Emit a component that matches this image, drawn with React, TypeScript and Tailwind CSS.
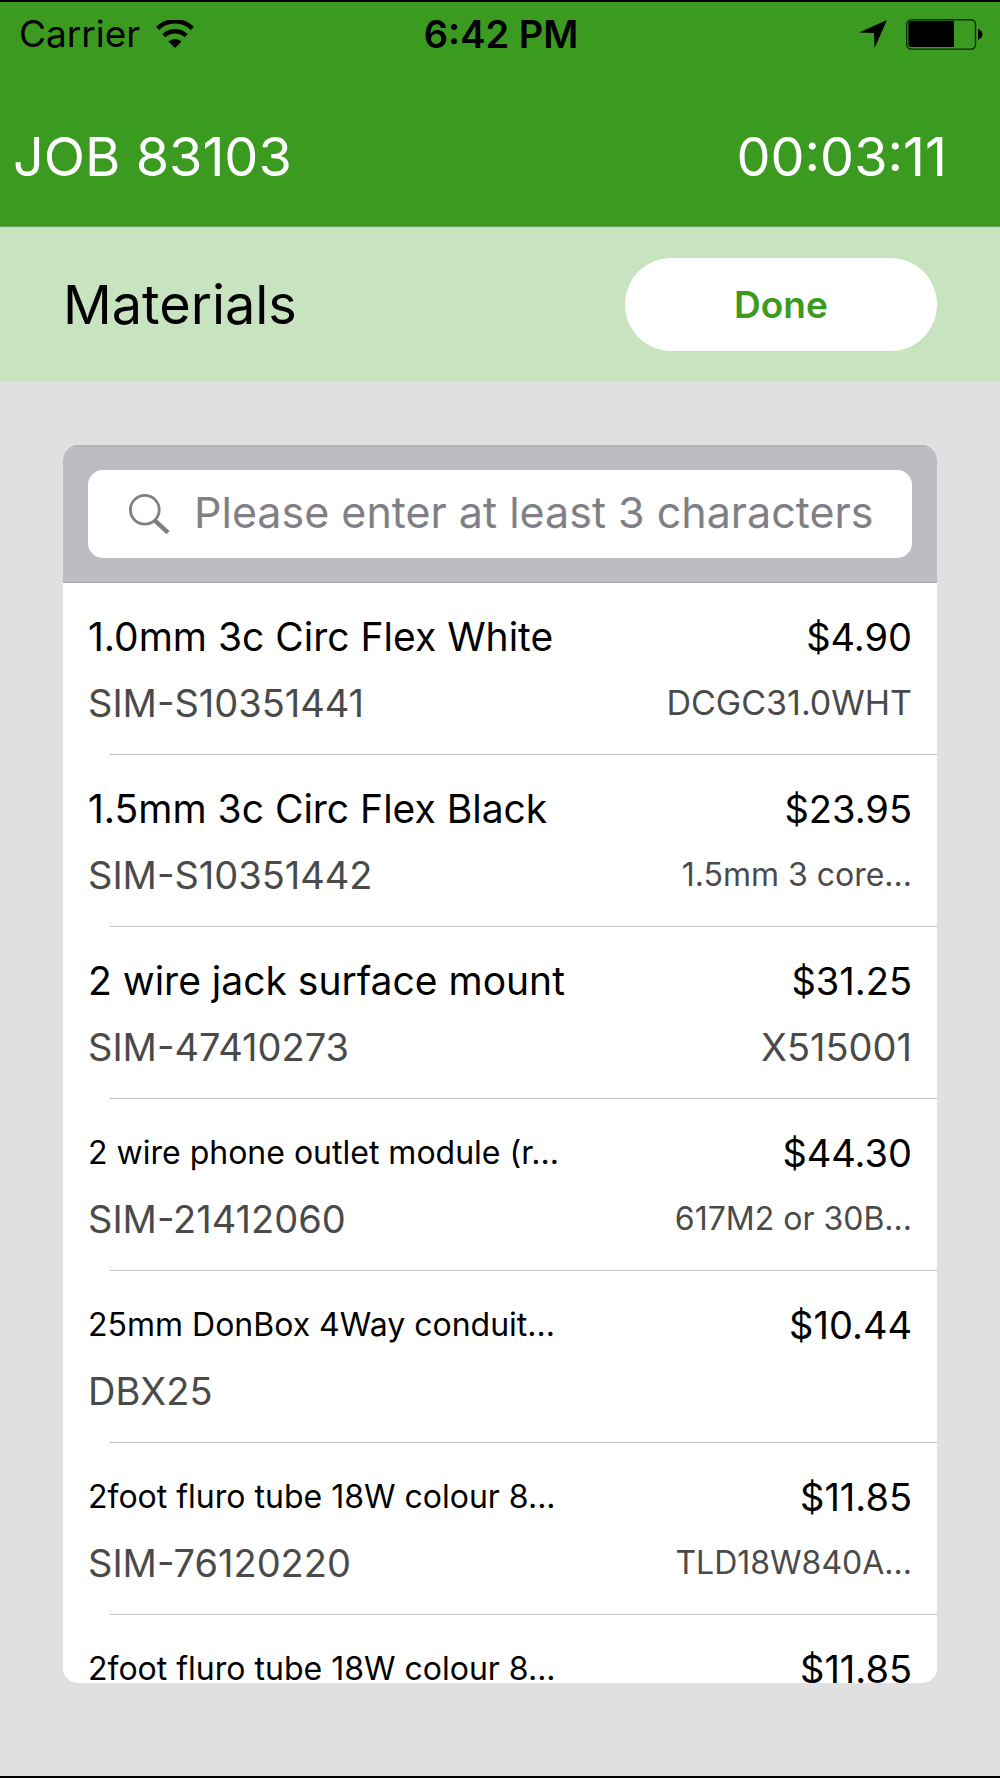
import React from "react";

type Material = {
  name: string;
  price: string;
  sku?: string;
  code?: string;
  codeSize?: string;
  longName?: boolean;
};

const materials: Material[] = [
  { name: "1.0mm 3c Circ Flex White", price: "$4.90", sku: "SIM-S10351441", code: "DCGC31.0WHT", codeSize: "text-[34px]" },
  { name: "1.5mm 3c Circ Flex Black", price: "$23.95", sku: "SIM-S10351442", code: "1.5mm 3 core...", codeSize: "text-[32px]" },
  { name: "2 wire jack surface mount", price: "$31.25", sku: "SIM-47410273", code: "X515001", codeSize: "text-[38px]" },
  { name: "2 wire phone outlet module (r...", price: "$44.30", sku: "SIM-21412060", code: "617M2 or 30B...", codeSize: "text-[32px]", longName: true },
  { name: "25mm DonBox 4Way conduit...", price: "$10.44", sku: "DBX25", longName: true },
  { name: "2foot fluro tube 18W colour 8...", price: "$11.85", sku: "SIM-76120220", code: "TLD18W840A...", codeSize: "text-[32px]", longName: true },
  { name: "2foot fluro tube 18W colour 8...", price: "$11.85", longName: true },
];

function WifiIcon() {
  return (
    <svg width="38" height="28" viewBox="0 0 38 28" aria-hidden="true">
      <path d="M1.6 8.4 A25 25 0 0 1 36.4 8.4" fill="none" stroke="#000" strokeWidth="4.4" />
      <path d="M7.8 15.8 A16 16 0 0 1 30.2 15.8" fill="none" stroke="#000" strokeWidth="4.4" />
      <path d="M12.4 21.6 A9.4 9.4 0 0 1 25.6 21.6 L19 28 Z" fill="#000" />
    </svg>
  );
}

function LocationIcon() {
  return (
    <svg width="28" height="28" viewBox="0 0 28 28" aria-hidden="true">
      <path d="M28 0 L15.6 28 L15 13 L0 12.4 Z" fill="#000" />
    </svg>
  );
}

function BatteryIcon() {
  return (
    <svg width="77" height="31" viewBox="0 0 77 31" aria-hidden="true">
      <rect x="0.7" y="0.7" width="68.8" height="29.4" rx="4.5" fill="none" stroke="#0b2a05" strokeWidth="1.4" />
      <path d="M4.5 2 H48 V28 H4.5 Q2.4 28 2.4 26 V4 Q2.4 2 4.5 2 Z" fill="#000" />
      <path d="M72 10 Q76.4 11.5 76.4 15.3 Q76.4 19.2 72 20.8 Z" fill="#000" />
    </svg>
  );
}

function SearchIcon() {
  return (
    <svg width="41" height="41" viewBox="0 0 41 41" aria-hidden="true" className="shrink-0">
      <circle cx="15.8" cy="15.8" r="14.4" fill="none" stroke="#7f7f85" strokeWidth="2.8" />
      <path d="M26 26.6 L39 38.6" stroke="#7f7f85" strokeWidth="4.4" />
    </svg>
  );
}

function MaterialRow({ item }: { item: Material }) {
  return (
    <li className="shrink-0">
      <div className="flex h-[171px] flex-col gap-[18px] px-[25px] pt-[30px] leading-[48px]">
        <div className="flex h-12 items-center justify-between whitespace-nowrap text-black">
          <span className={item.longName ? "text-[32px]" : "text-[39px]"}>{item.name}</span>
          <span className="text-[38px]">{item.price}</span>
        </div>
        <div className="flex h-12 items-center justify-between whitespace-nowrap text-[#4a4a4a]">
          <span className="text-[38px]">{item.sku}</span>
          <span className={item.codeSize}>{item.code}</span>
        </div>
      </div>
      <div className="ml-[47px] h-px bg-[#c4c4c8]" />
    </li>
  );
}

export default function App() {
  return (
    <div className="flex h-screen flex-col overflow-hidden border-y-2 border-black bg-[#e0e0e0] font-['Inter',sans-serif]">
      <header className="shrink-0 border-b border-[#6a9a5c] bg-[#3b9a20]">
        <div className="grid h-16 grid-cols-3 items-center pr-[17px] pl-[19px] text-[37px] text-black">
          <div className="flex items-center gap-4">
            <span>Carrier</span>
            <WifiIcon />
          </div>
          <span className="text-center text-[38px] font-semibold">6:42 PM</span>
          <div className="flex items-center justify-end gap-[19px]">
            <LocationIcon />
            <BatteryIcon />
          </div>
        </div>
        <div className="flex h-40 items-center justify-between pt-5 pr-[53px] pl-[13px] text-[54px] text-white">
          <h1>JOB 83103</h1>
          <time>00:03:11</time>
        </div>
      </header>

      <section className="flex h-[155px] shrink-0 items-center justify-between bg-[#c8e3c0] px-[63px]">
        <h2 className="text-[54px] text-black">Materials</h2>
        <button type="button" className="h-[93px] w-[312px] rounded-full bg-white text-[37px] font-semibold text-[#3b9a20]">
          Done
        </button>
      </section>

      <main className="mx-[63px] mt-[63px] mb-[93px] flex min-h-0 flex-1 flex-col overflow-hidden rounded-[15px] bg-white">
        <div className="shrink-0 border-t-2 border-b border-t-[#b4b4b8] border-b-[#a5a5a9] bg-[#bdbcc3] px-[25px] pt-[23px] pb-6">
          <label className="flex h-[88px] items-center gap-6 rounded-[15px] bg-white pr-4 pl-[41px]">
            <SearchIcon />
            <input
              type="text"
              aria-label="Search materials"
              placeholder="Please enter at least 3 characters"
              className="min-w-0 flex-1 bg-transparent pb-1 text-[43px] text-black outline-none placeholder:text-[#7f7f85]"
            />
          </label>
        </div>
        <ul className="flex min-h-0 flex-1 flex-col overflow-y-auto [scrollbar-width:none]">
          {materials.map((item, i) => (
            <MaterialRow key={i} item={item} />
          ))}
        </ul>
      </main>
    </div>
  );
}
